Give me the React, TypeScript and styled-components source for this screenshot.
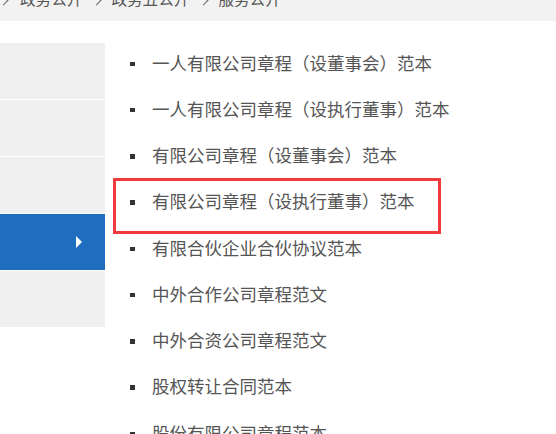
import React from 'react';
import styled, { createGlobalStyle, css } from 'styled-components';

const GlobalStyle = createGlobalStyle`
  html, body {
    margin: 0;
    padding: 0;
    background: #ffffff;
    font-family: "Noto Sans CJK SC", "Noto Sans", sans-serif;
  }
`;

const Page = styled.div`
  width: 556px;
  height: 434px;
  overflow: hidden;
  background: #ffffff;
`;

const Breadcrumb = styled.div`
  height: 21px;
  background: #f2f2f2;
  overflow: hidden;
`;

const Trail = styled.div`
  display: flex;
  align-items: center;
  margin-top: -12px;
  height: 20px;
  font-size: 15.6px;
  line-height: 20px;
  color: #555555;
  white-space: nowrap;
`;

const Separator = styled.span<{ $first?: boolean }>`
  display: inline-block;
  flex-shrink: 0;
  width: 6px;
  height: 6px;
  border-right: 1.5px solid #666666;
  border-bottom: 1.5px solid #666666;
  transform: translateY(2px) rotate(-45deg);
  margin: ${(p) => (p.$first ? '0 13px 0 0' : '0 11px 0 11px')};
`;

const Main = styled.div`
  display: flex;
  margin-top: 22px;
`;

const Sidebar = styled.div`
  width: 105px;
  display: flex;
  flex-direction: column;
  gap: 1px;
  flex-shrink: 0;
`;

const SideItem = styled.div<{ $active?: boolean }>`
  height: 56px;
  background: ${(p) => (p.$active ? '#1f6dbf' : '#f0f0f0')};
  display: flex;
  align-items: center;
  justify-content: flex-end;
  padding-right: 23px;
`;

const Arrow = styled.span`
  width: 0;
  height: 0;
  border-top: 6px solid transparent;
  border-bottom: 6px solid transparent;
  border-left: 6px solid #ffffff;
`;

const List = styled.ul`
  list-style: none;
  margin: 0;
  padding: 0;
  flex: 1;
`;

const Item = styled.li<{ $marked?: boolean }>`
  position: relative;
  box-sizing: border-box;
  height: 46.25px;
  display: flex;
  align-items: center;
  padding-left: 25px;
  padding-bottom: 8px;
  font-size: 17.5px;
  color: #555555;
  white-space: nowrap;

  ${(p) =>
    p.$marked &&
    css`
      &::after {
        content: '';
        position: absolute;
        left: 8px;
        top: -3.5px;
        width: 322px;
        height: 50px;
        border: 3px solid #f03a3d;
        pointer-events: none;
      }
    `}
`;

const Bullet = styled.span`
  width: 4.5px;
  height: 4.5px;
  background: #333333;
  margin-top: 3.5px;
  margin-right: 17.5px;
  flex-shrink: 0;
`;

const crumbs = ['政务公开', '政务五公开', '服务公开'];

const sideItems = [false, false, false, true, false];

const docs = [
  '一人有限公司章程（设董事会）范本',
  '一人有限公司章程（设执行董事）范本',
  '有限公司章程（设董事会）范本',
  '有限公司章程（设执行董事）范本',
  '有限合伙企业合伙协议范本',
  '中外合作公司章程范文',
  '中外合资公司章程范文',
  '股权转让合同范本',
  '股份有限公司章程范本',
];

export default function App() {
  return (
    <Page>
      <GlobalStyle />
      <Breadcrumb>
        <Trail>
          {crumbs.map((c, i) => (
            <React.Fragment key={c}>
              <Separator $first={i === 0} />
              <span>{c}</span>
            </React.Fragment>
          ))}
        </Trail>
      </Breadcrumb>
      <Main>
        <Sidebar>
          {sideItems.map((active, i) => (
            <SideItem key={i} $active={active}>
              {active && <Arrow />}
            </SideItem>
          ))}
        </Sidebar>
        <List>
          {docs.map((d, i) => (
            <Item key={d} $marked={i === 3}>
              <Bullet />
              {d}
            </Item>
          ))}
        </List>
      </Main>
    </Page>
  );
}
